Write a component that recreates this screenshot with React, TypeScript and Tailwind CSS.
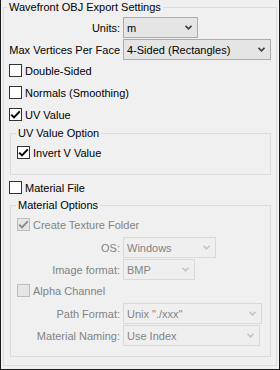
import React from 'react';

const Chevron = ({ disabled }: { disabled?: boolean }) => (
  <svg width="7" height="5" viewBox="0 0 7 5" className="shrink-0">
    <path d="M0.5 0.8 L3.5 3.8 L6.5 0.8" fill="none" stroke={disabled ? '#c4c4c4' : '#404040'} strokeWidth="1.6" />
  </svg>
);

const Combo = ({ value, className, disabled }: { value: string; className: string; disabled?: boolean }) => (
  <div
    className={
      'h-[21px] flex items-center justify-between border pl-[3px] pr-[5px] ' +
      (disabled ? 'border-[#d9d9d9] bg-[#efefef] text-[#838383] ' : 'border-[#acacac] bg-[#e5e5e5] text-black ') +
      className
    }
  >
    <span className="whitespace-nowrap">{value}</span>
    <Chevron disabled={disabled} />
  </div>
);

const Row = ({
  label,
  value,
  comboClass,
  labelClass,
  rowClass,
  disabled,
}: {
  label: string;
  value: string;
  comboClass: string;
  labelClass: string;
  rowClass: string;
  disabled?: boolean;
}) => (
  <div className={'flex items-center ' + rowClass}>
    <span className={'text-right whitespace-nowrap ' + labelClass + (disabled ? ' text-[#838383]' : '')}>{label}</span>
    <Combo value={value} className={'ml-[3px] ' + comboClass} disabled={disabled} />
  </div>
);

const CheckBox = ({
  label,
  checked,
  disabled,
  className,
}: {
  label: string;
  checked?: boolean;
  disabled?: boolean;
  className: string;
}) => (
  <div className={'flex items-center h-[15px] gap-[3px] ' + className}>
    <span
      className={
        'w-[13px] h-[13px] border flex items-center justify-center ' +
        (disabled ? 'border-[#bcbcbc] bg-[#e6e6e6]' : 'border-[#333333] bg-white')
      }
    >
      {checked && (
        <svg width="11" height="11" viewBox="0 0 11 11">
          <path
            d="M1.2 5.6 L4 8.4 L9.8 2.4"
            fill="none"
            stroke={disabled ? '#8a8a8a' : '#000'}
            strokeWidth="2"
          />
        </svg>
      )}
    </span>
    <span className={'whitespace-nowrap ' + (disabled ? 'text-[#838383]' : '')}>{label}</span>
  </div>
);

export default function App() {
  return (
    <div className="w-[280px] h-[370px] bg-[#f0f0f0] border-x border-b border-[#1a1a1a] text-[11px] leading-[14px] text-black font-['Liberation_Sans',Arial,sans-serif]">
      <fieldset className="mx-[2px] border border-[#dcdcdc] pb-[8px]">
        <legend className="ml-[3px] px-[2px] leading-[14px]">Wavefront OBJ Export Settings</legend>

        <Row label="Units:" value="m" labelClass="w-[116px]" comboClass="w-[75px]" rowClass="mt-[3px]" />
        <Row
          label="Max Vertices Per Face"
          value="4-Sided (Rectangles)"
          labelClass="w-[116px]"
          comboClass="w-[148px]"
          rowClass="mt-[1px]"
        />

        <CheckBox label="Double-Sided" className="mt-[3px] pl-[5px]" />
        <CheckBox label="Normals (Smoothing)" className="mt-[7px] pl-[5px]" />
        <CheckBox label="UV Value" checked className="mt-[7px] pl-[5px]" />

        <fieldset className="mt-[4px] ml-[6px] mr-[5px] border border-[#dcdcdc] pb-[14px]">
          <legend className="ml-[5px] px-[2px] leading-[14px]">UV Value Option</legend>
          <CheckBox label="Invert V Value" checked className="mt-[5px] pl-[6px]" />
        </fieldset>

        <CheckBox label="Material File" className="mt-[5px] pl-[5px]" />

        <fieldset className="mt-[3px] ml-[6px] mr-[5px] border border-[#dcdcdc] pb-[10px]">
          <legend className="ml-[5px] px-[2px] leading-[14px]">Material Options</legend>
          <CheckBox label="Create Texture Folder" checked disabled className="mt-[5px] pl-[6px]" />
          <Row label="OS:" value="Windows" labelClass="w-[109px]" comboClass="w-[93px]" rowClass="mt-[5px]" disabled />
          <Row label="Image format:" value="BMP" labelClass="w-[109px]" comboClass="w-[72px]" rowClass="mt-[1px]" disabled />
          <CheckBox label="Alpha Channel" disabled className="mt-[3px] pl-[6px]" />
          <Row
            label="Path Format:"
            value='Unix "./xxx"'
            labelClass="w-[109px]"
            comboClass="w-[139px]"
            rowClass="mt-[5px]"
            disabled
          />
          <Row
            label="Material Naming:"
            value="Use Index"
            labelClass="w-[109px]"
            comboClass="w-[137px]"
            rowClass="mt-[1px]"
            disabled
          />
        </fieldset>
      </fieldset>
    </div>
  );
}
